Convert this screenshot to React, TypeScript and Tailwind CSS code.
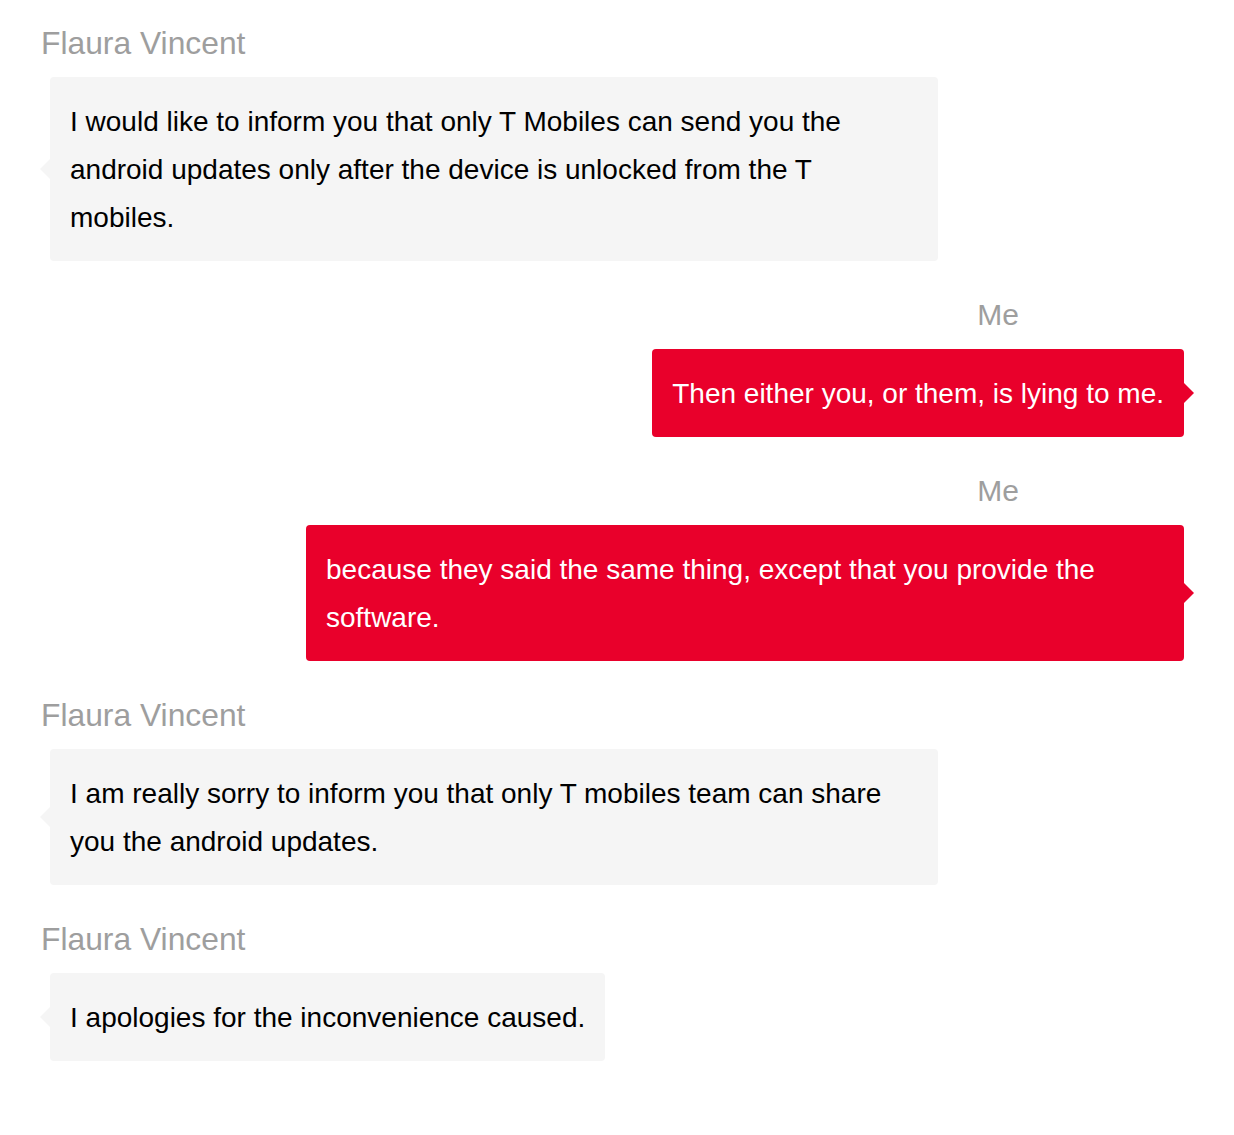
import React from "react";

type Message = { from: "them" | "me"; name: string; text: string };

const messages: Message[] = [
  {
    from: "them",
    name: "Flaura Vincent",
    text: "I would like to inform you that only T Mobiles can send you the android updates only after the device is unlocked from the T mobiles.",
  },
  { from: "me", name: "Me", text: "Then either you, or them, is lying to me." },
  {
    from: "me",
    name: "Me",
    text: "because they said the same thing, except that you provide the software.",
  },
  {
    from: "them",
    name: "Flaura Vincent",
    text: "I am really sorry to inform you that only T mobiles team can share you the android updates.",
  },
  { from: "them", name: "Flaura Vincent", text: "I apologies for the inconvenience caused." },
];

function Bubble({ msg }: { msg: Message }) {
  if (msg.from === "me") {
    return (
      <div className="flex flex-col items-end">
        <p className="mr-[165px] text-[30px] leading-[40px] text-[#9e9e9e]">{msg.name}</p>
        <div className="relative mt-[14px] max-w-[878px] rounded-[4px] bg-[#e9002b] px-[20px] pb-[19px] pt-[21px] text-[28px] leading-[48px] text-white">
          {msg.text}
          {/* tail */}
          <span className="absolute right-[-10px] top-1/2 -mt-[10px] h-0 w-0 border-y-[10px] border-l-[10px] border-y-transparent border-l-[#e9002b]" />
        </div>
      </div>
    );
  }
  return (
    <div className="flex flex-col items-start">
      <p className="text-[31.8px] leading-[40px] text-[#9e9e9e]">{msg.name}</p>
      <div className="relative ml-[9px] mt-[14px] max-w-[888px] rounded-[4px] bg-[#f5f5f5] px-[20px] pb-[19px] pt-[21px] text-[28px] leading-[48px] text-black">
        {msg.text}
        <span className="absolute left-[-10px] top-1/2 -mt-[10px] h-0 w-0 border-y-[10px] border-r-[10px] border-y-transparent border-r-[#f5f5f5]" />
      </div>
    </div>
  );
}

export default function App() {
  return (
    <div
      className="min-h-screen bg-white pl-[41px] pr-[50px] pt-[23px]"
      style={{ fontFamily: '"Liberation Sans", Arial, sans-serif' }}
    >
      <div className="flex flex-col gap-[34px]">
        {messages.map((m, i) => (
          <Bubble key={i} msg={m} />
        ))}
      </div>
    </div>
  );
}
